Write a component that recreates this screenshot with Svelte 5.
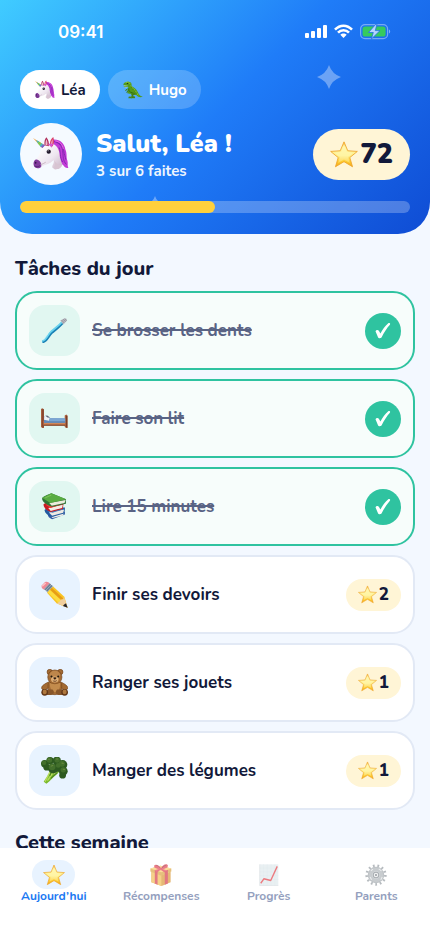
<script lang="ts">
	type Child = { id: string; name: string; icon: string };
	type Task = { id: number; label: string; icon: string; stars: number; done: boolean };

	const children: Child[] = [
		{ id: 'lea', name: 'Léa', icon: 'unicorn' },
		{ id: 'hugo', name: 'Hugo', icon: 'dino' }
	];

	const tabs = [
		{ id: 'today', label: 'Aujourd’hui', icon: 'star' },
		{ id: 'rewards', label: 'Récompenses', icon: 'gift' },
		{ id: 'progress', label: 'Progrès', icon: 'chart' },
		{ id: 'parents', label: 'Parents', icon: 'gear' }
	];

	let tasks = $state<Task[]>([
		{ id: 1, label: 'Se brosser les dents', icon: 'toothbrush', stars: 1, done: true },
		{ id: 2, label: 'Faire son lit', icon: 'bed', stars: 1, done: true },
		{ id: 3, label: 'Lire 15 minutes', icon: 'books', stars: 2, done: true },
		{ id: 4, label: 'Finir ses devoirs', icon: 'pencil', stars: 2, done: false },
		{ id: 5, label: 'Ranger ses jouets', icon: 'bear', stars: 1, done: false },
		{ id: 6, label: 'Manger des légumes', icon: 'broccoli', stars: 1, done: false }
	]);

	let activeChild = $state('lea');
	let activeTab = $state('today');
	let points = $state(72);

	let child = $derived(children.find((c) => c.id === activeChild) ?? children[0]);
	let doneCount = $derived(tasks.filter((t) => t.done).length);
	let progress = $derived((doneCount / tasks.length) * 100);

	function toggle(task: Task) {
		task.done = !task.done;
		points += task.done ? task.stars : -task.stars;
	}
</script>

{#snippet emoji(name: string)}
	{#if name === 'star'}
		<svg class="emoji" viewBox="0 0 82 78" aria-hidden="true">
			<path d="M41 2 52 28 80 30 58 48 66 75 41 60 16 75 24 48 2 30 30 28Z" fill="url(#star-fill)" stroke="#eda52c" stroke-width="2.5" stroke-linejoin="round" />
			<path d="M41 10 49 31 69 34 53 46 58 64 41 54 24 64 29 46 13 34 33 31Z" fill="#fffbd0" opacity=".35" />
		</svg>
	{:else if name === 'unicorn'}
		<svg class="emoji" viewBox="0 0 110 104" aria-hidden="true">
			<path d="M56 9C77 3 96 17 99 38c6 12 2 24 6 34 3 8-1 15 3 23-9 1-13-4-16-9-7-4-9-13-9-22-9-8-10-17-11-28Z" fill="#c13bd6" />
			<path d="M64 14c17 3 27 17 27 32 2 13-1 25 11 38M73 16c14 5 20 16 21 27 1 12 6 17 6 26M80 32c5 14 1 31 11 45" fill="none" stroke="#8428b4" stroke-width="3" />
			<path d="M68 12c14 1 22 12 25 24" fill="none" stroke="#ef6ce4" stroke-width="3" />
			<path d="M31 28C43 17 66 18 74 31c12 19 3 29 15 50 1 15-20 23-30 12-1-9 7-13 4-23C52 82 38 84 27 89 20 99 4 97 2 84 1 74 8 69 14 62 20 54 25 38 31 28Z" fill="url(#coat)" />
			<path d="M63 70c6 7 3 20 2 29 9 2 22-4 24-14-8 4-18-4-26-15Z" fill="#d8c4d2" />
			<path d="M4 73c5-8 13-4 19 4 2 5 3 9 2 14C19 99 4 97 2 86c-1-5 0-9 2-13Z" fill="#813b9c" />
			<ellipse cx="8" cy="79" rx="2.5" ry="3" fill="#37144f" />
			<path d="m5 89c6 3 12 2 16-1" fill="none" stroke="#431b61" stroke-width="2" />
			<path d="M35 25C34 12 37 5 41 1c6 8 9 17 7 27Z" fill="#ae2b58" />
			<path d="M52 24C51 13 55 5 62 0c3 10 3 19-2 29Z" fill="#dc3d68" />
			<path d="M38 24c0-8 1-13 3-17 3 7 4 12 3 19ZM55 25c0-8 2-13 5-18 0 9 0 15-4 20Z" fill="#efb9cc" />
			<path d="M46 22c6-4 12-3 18 2-5 0-7 4-6 9Z" fill="#d855ce" />
			<path d="M0 3 36 25 28 34Z" fill="#f5a33f" />
			<path d="m9 9 10 5-4 6ZM25 18l6 4-7 9-4-5Z" fill="#49b9bd" />
			<path d="m18 14 7 4-5 8-5-6Z" fill="#7acc50" />
			<path d="m31 22 6 3-8 9-5-4Z" fill="#7362d3" />
			<circle cx="48" cy="45" r="6.5" fill="#21182b" />
			<circle cx="46" cy="42" r="1.8" fill="#fff" />
			<path d="M22 84c9-1 11-4 17-7" fill="none" stroke="#b69cac" stroke-width="2" />
		</svg>
	{:else if name === 'dino'}
		<svg class="emoji" viewBox="0 0 68 58" aria-hidden="true">
			<path d="M1 10C3 3 10 0 20 1c8 1 10 6 9 13 2 5 8 6 12 10 8 5 10 16 15 22 4 4 8 5 11 4-5 6-15 4-22-4-3 0-5-1-8-2l-3 5 7 4v4H27l4-8-5-7c-7 1-11-3-11-10 0-7 5-10 2-14L5 20l-3-4 8-2-8-1Z" fill="#539b1c" />
			<path d="M9 4c7-4 15-1 15 5M25 14c3 6 10 7 14 13 6 6 7 14 13 20" fill="none" stroke="#91ca36" stroke-width="3" />
			<path d="M20 23c-2 9 3 14 11 15l7 5-7 2" fill="none" stroke="#2e6813" stroke-width="3" />
			<path d="M16 25 9 29l2 4M20 30l-7 6 2 4" fill="none" stroke="#3f7c18" stroke-width="3" />
			<path d="m4 14 12 1M4 18l9 2" stroke="#e5e7be" stroke-width="1.5" />
			<path d="M29 40c4-5 12-3 14 2-3 5-8 2-10 9h7v5h-9l-3-6c3-3 3-6 1-10Z" fill="#467f18" />
			<path d="m20 51 10 1v5H18Z" fill="#47841b" />
			<circle cx="15" cy="7" r="2" fill="#211b0b" />
			<path d="m27 19 4 1m2 7 3-2m3 8 4-2m1 9 4-1" stroke="#2b6313" stroke-width="2" />
		</svg>
	{:else if name === 'toothbrush'}
		<svg class="emoji" viewBox="0 0 80 80" aria-hidden="true">
			<path d="M7 73c11-3 15-18 25-27 14-11 22-17 33-30" fill="none" stroke="#1981b5" stroke-width="8" stroke-linecap="round" />
			<path d="M5 71c12-4 15-19 25-28 13-11 23-17 34-30" fill="none" stroke="#68d2ee" stroke-width="5" stroke-linecap="round" />
			<path d="m57 10 13-6c5-1 8 3 6 8L66 22Z" fill="#b4b8bf" />
			<path d="m61 9 8 9m-4-12 8 8m-3-9 6 6" stroke="#8f8590" stroke-width="2" />
			<path d="M20 51c-6 7-9 14-14 18" fill="none" stroke="#c9f4fb" stroke-width="2" />
		</svg>
	{:else if name === 'bed'}
		<svg class="emoji" viewBox="0 0 82 62" aria-hidden="true">
			<path d="M0 2 4 0l5 3v57H4l-4-3ZM72 22l5-3 4 4v37h-5l-4-4Z" fill="#a95f3d" />
			<path d="M6 3v55M78 23v35" stroke="#6e3525" stroke-width="3" />
			<path d="M7 38h67v15H7Z" fill="#b76b43" />
			<path d="M9 25c5-2 14-1 19 5l46 1v14H9Z" fill="#6189b8" />
			<path d="M10 24c8-3 15 0 18 6l-4 8L9 35Z" fill="#eef2f6" />
			<path d="M25 30h48v9H25Z" fill="#7ba6d3" />
			<path d="m13 23 6-1 9 7-8-1Z" fill="#5e6579" />
			<path d="M9 46h64" stroke="#d1895b" stroke-width="3" />
			<path d="M7 52h67" stroke="#71402d" stroke-width="2" />
		</svg>
	{:else if name === 'books'}
		<svg class="emoji" viewBox="0 0 76 78" aria-hidden="true">
			<path d="M18 61c6-6 15-6 20-6l30-1v8L31 76c-8-3-12-7-13-15Z" fill="#3159a5" />
			<path d="m27 66 38-9-2 8-31 7Z" fill="#f2ede5" />
			<path d="m22 61 36-11 9 5-36 14Z" fill="#5a80bc" />
			<path d="M9 49c8-8 18-7 24-7h35v6l-2 11-36 10C18 64 10 58 9 49Z" fill="#225aa0" />
			<path d="m22 56 44-8-3 9-32 9Z" fill="#eee9e3" />
			<path d="m16 52 34-9 17 3-35 11Z" fill="#457ebc" />
			<path d="M6 33c6-7 18-6 24-5l34 2-2 16-35 9C13 49 8 43 6 33Z" fill="#c81922" />
			<path d="m20 43 42-9-2 9-33 9Z" fill="#f2ede6" />
			<path d="m12 34 27-8 23 6-35 11Z" fill="#f13831" />
			<path d="M2 16C8 7 20 6 29 1l42 17v13L31 40C13 33 3 26 2 16Z" fill="#2e7436" />
			<path d="m23 29 47-9-3 9-37 8Z" fill="#ecebdd" />
			<path d="M2 14 29 1l43 17-46 11Z" fill="#59ac42" />
			<path d="m11 14 18-8" stroke="#92ce66" stroke-width="2" />
		</svg>
	{:else if name === 'pencil'}
		<svg class="emoji" viewBox="0 0 80 80" aria-hidden="true">
			<path d="m2 13 10-10c6-3 12 0 17 8L12 27C4 24 0 19 2 13Z" fill="#ef8994" />
			<path d="m9 24 16-17 12 11-17 17Z" fill="#9caabb" />
			<path d="m12 26 16-17m-11 20 16-16" stroke="#5d7589" stroke-width="3" />
			<path d="m18 35 18-19 33 31 10 32-32-12Z" fill="#fac421" />
			<path d="m26 26 34 32-7 7-33-31Z" fill="#fcdc41" />
			<path d="m32 20 34 32-5 5-34-31Z" fill="#e69d18" />
			<path d="m46 66 8-4 5-7 7-1 2-7 11 32Z" fill="#f0ce9d" />
			<path d="m68 70 6-4 5 13-14-5Z" fill="#252329" />
			<path d="m5 14 8-7" stroke="#ffc3c5" stroke-width="4" stroke-linecap="round" />
		</svg>
	{:else if name === 'bear'}
		<svg class="emoji" viewBox="0 0 80 80" aria-hidden="true">
			<g fill="#a36b34" stroke="#754319" stroke-width="2">
				<circle cx="26" cy="9" r="8" />
				<circle cx="57" cy="9" r="8" />
				<path d="M23 38C12 44 1 49 2 57c2 8 12 7 25-6M58 38c11 6 22 11 21 19-2 8-12 7-25-6" />
				<path d="M21 44c-1 21 3 32 20 32s22-12 20-32L52 33H30Z" />
				<ellipse cx="41" cy="24" rx="21" ry="21" />
			</g>
			<path d="M26 41c12 7 22 4 31 0 0 18-5 26-15 28-11-2-16-12-16-28Z" fill="#c38b4c" />
			<ellipse cx="41" cy="18" rx="16" ry="13" fill="#bd864b" />
			<ellipse cx="41" cy="31" rx="11" ry="9" fill="#e2b279" />
			<circle cx="31" cy="22" r="3" fill="#20180f" />
			<circle cx="51" cy="22" r="3" fill="#20180f" />
			<path d="M36 26c4-2 7-2 10 0-1 5-8 6-10 0Z" fill="#2a190f" />
			<path d="M41 30v4m-6 0c4 4 8 4 12 0" fill="none" stroke="#502d17" stroke-width="2" />
			<path d="M18 61h16c7 6 5 15-4 16H9ZM64 61H48c-7 6-5 15 4 16h20Z" fill="#88562a" />
			<ellipse cx="11" cy="69" rx="10" ry="10" fill="#633818" />
			<ellipse cx="70" cy="69" rx="10" ry="10" fill="#633818" />
			<ellipse cx="11" cy="68" rx="6" ry="7" fill="#af783e" />
			<ellipse cx="70" cy="68" rx="6" ry="7" fill="#af783e" />
		</svg>
	{:else if name === 'broccoli'}
		<svg class="emoji" viewBox="0 0 80 80" aria-hidden="true">
			<path d="M30 34c-1 14-15 27-22 39l8 6c12-8 19-20 32-29l9-10Z" fill="#79ba2c" />
			<path d="M27 43 12 73M38 43 19 70M38 51l12-13" fill="none" stroke="#b7db5a" stroke-width="4" />
			<path d="m31 43-5 13m22-10L29 63" stroke="#498020" stroke-width="3" />
			<g fill="#2d5a20">
				<circle cx="11" cy="20" r="11" />
				<circle cx="27" cy="11" r="11" />
				<circle cx="47" cy="11" r="12" />
				<circle cx="64" cy="23" r="14" />
				<circle cx="66" cy="42" r="13" />
				<circle cx="64" cy="54" r="10" />
				<circle cx="17" cy="30" r="10" />
				<circle cx="36" cy="34" r="15" />
				<circle cx="50" cy="30" r="14" />
			</g>
			<g fill="#43702c">
				<circle cx="9" cy="17" r="7" />
				<circle cx="25" cy="9" r="8" />
				<circle cx="48" cy="9" r="8" />
				<circle cx="62" cy="20" r="9" />
				<circle cx="66" cy="38" r="8" />
				<circle cx="33" cy="29" r="10" />
				<circle cx="51" cy="25" r="7" />
			</g>
			<path d="M22 7h3m21-1h4m12 12 4 1M30 27l5-2m31 11 4 1" stroke="#6a8b40" stroke-width="3" stroke-linecap="round" />
		</svg>
	{:else if name === 'gift'}
		<svg class="emoji" viewBox="0 0 64 64" aria-hidden="true">
			<path d="m4 22 28 11 28-11v31L34 64 4 53Z" fill="#d48a1c" />
			<path d="m4 22 29 11v31L4 53Z" fill="#efb33b" />
			<path d="m1 13 29-8 32 8v9L33 34 1 22Z" fill="#d79728" />
			<path d="m1 13 29-8 32 8-29 11Z" fill="#f8cb59" />
			<path d="m14 17 8 3v40l-8-3ZM43 20l9-3v40l-9 3Z" fill="#cf2030" />
			<path d="m11 10 8-2 31 11-8 3ZM44 8l8 2-31 11-8-3Z" fill="#e83d47" />
			<path d="M30 14C23 13 11 11 12 5c3-7 17 0 20 8 3-10 17-17 20-9 2 7-11 9-18 10l11 7-3 4-11-10-10 10-5-5Z" fill="#dc2438" />
			<path d="M18 4c5 0 9 4 12 8m5 0c3-5 8-8 12-8" fill="none" stroke="#7c1326" stroke-width="2" />
		</svg>
	{:else if name === 'chart'}
		<svg class="emoji" viewBox="0 0 64 64" aria-hidden="true">
			<path d="M5 1h54v62H5Z" fill="#dce7eb" />
			<path d="M5 12h54M5 23h54M5 34h54M5 45h54M16 1v62M27 1v62M38 1v62M49 1v62" stroke="#cbdce1" stroke-width="1" />
			<path d="M5 1v62h54" fill="none" stroke="#c6cfd2" stroke-width="2" />
			<path d="m8 56 9-13 20 5L56 7" fill="none" stroke="#e1232b" stroke-width="4" stroke-linejoin="round" />
		</svg>
	{:else if name === 'gear'}
		<svg class="emoji" viewBox="0 0 64 64" aria-hidden="true">
			<circle cx="32" cy="32" r="27" fill="none" stroke="#868e95" stroke-width="8" stroke-dasharray="5 8.05" />
			<circle cx="32" cy="32" r="19" fill="#c4cacd" stroke="#959ca2" stroke-width="10" />
			<circle cx="32" cy="32" r="16" fill="none" stroke="#a4abb0" stroke-width="10" />
			<circle cx="32" cy="32" r="8" fill="#e8eaeb" stroke="#717980" stroke-width="3" />
			<circle cx="32" cy="32" r="3" fill="#545b63" />
			<path d="m17 20 6-5m17-1 8 6M15 38l4 8m27 0 4-8" stroke="#e2e5e6" stroke-width="3" />
		</svg>
	{/if}
{/snippet}

<svg class="defs" width="0" height="0" aria-hidden="true">
	<defs>
		<linearGradient id="star-fill" x1="0" y1="0" x2="0" y2="1">
			<stop offset="0" stop-color="#fbb63b" />
			<stop offset=".2" stop-color="#fff3a0" />
			<stop offset=".55" stop-color="#fff08a" />
			<stop offset=".8" stop-color="#fdc82a" />
			<stop offset="1" stop-color="#f4a51c" />
		</linearGradient>
		<linearGradient id="coat" x1="0" y1="0" x2="1" y2="1">
			<stop offset=".2" stop-color="#fff" />
			<stop offset=".6" stop-color="#ede5ef" />
			<stop offset="1" stop-color="#c7afc3" />
		</linearGradient>
	</defs>
</svg>

<div class="app">
	<div class="scroll">
		<header>
			<svg class="sparkle sparkle-top" viewBox="0 0 24 24" aria-hidden="true">
				<path d="M12 0Q15 9 24 12Q15 15 12 24Q9 15 0 12Q9 9 12 0Z" />
			</svg>
			<svg class="sparkle sparkle-low" viewBox="0 0 24 24" aria-hidden="true">
				<path d="M12 0Q15 9 24 12Q15 15 12 24Q9 15 0 12Q9 9 12 0Z" />
			</svg>

			<div class="status">
				<time>09:41</time>
				<svg width="86" height="16" viewBox="0 0 86 16" aria-hidden="true">
					<g fill="#fff">
						<rect x="0" y="9" width="4" height="5" rx="1" />
						<rect x="6" y="7" width="4" height="7" rx="1" />
						<rect x="12" y="4" width="4" height="10" rx="1" />
						<rect x="18" y="1" width="4" height="13" rx="1" />
					</g>
					<g fill="none" stroke="#fff" stroke-width="2.6">
						<path d="M30 5.6C35 .4 42 .4 47 5.6" />
						<path d="M33 8.6C36 5.4 41 5.4 44 8.6" />
					</g>
					<path d="M35.3 10.8C37 9 40 9 41.7 10.8L38.5 14Z" fill="#fff" />
					<rect x="55.6" y=".6" width="27" height="14" rx="4.4" fill="none" stroke="#fff" stroke-opacity=".4" stroke-width="1.2" />
					<path d="M84 5.5c1.6.6 1.6 3.4 0 4Z" fill="#fff" opacity=".45" />
					<rect x="57.6" y="2.6" width="23" height="10" rx="2.6" fill="#36ca5c" />
					<path d="M71 0 63.5 8.5H68.3L66.4 15 75 6.6H70.3L72 0Z" fill="#b6d5ff" stroke="#2271e4" stroke-width=".8" />
				</svg>
			</div>

			<div class="children">
				{#each children as c (c.id)}
					<button
						class="child"
						class:active={c.id === activeChild}
						aria-pressed={c.id === activeChild}
						onclick={() => (activeChild = c.id)}
					>
						{@render emoji(c.icon)}
						{c.name}
					</button>
				{/each}
			</div>

			<div class="hero">
				<div class="avatar">{@render emoji(child.icon)}</div>
				<div class="greeting">
					<h1>Salut, {child.name} !</h1>
					<p>{doneCount} sur {tasks.length} faites</p>
				</div>
				<div class="points">
					{@render emoji('star')}
					<span>{points}</span>
				</div>
			</div>

			<div
				class="bar"
				role="progressbar"
				aria-label="Tâches faites"
				aria-valuenow={doneCount}
				aria-valuemin="0"
				aria-valuemax={tasks.length}
			>
				<div class="bar-fill" style="width: {progress}%"></div>
			</div>
		</header>

		<main>
			<h2>Tâches du jour</h2>
			<ul>
				{#each tasks as task (task.id)}
					<li>
						<button class="task" class:done={task.done} aria-pressed={task.done} onclick={() => toggle(task)}>
							<span class="task-icon">{@render emoji(task.icon)}</span>
							<span class="task-label">{task.label}</span>
							{#if task.done}
								<svg class="check" viewBox="0 0 36 36" aria-hidden="true">
									<circle cx="18" cy="18" r="18" fill="#2fc3a0" />
									<path d="M10.5 18.3C11.2 16.8 13.2 16.4 14 18L15.4 20.4C17.7 16.2 20.2 12.8 23 10.4C24.2 9.6 25.8 10.4 24.9 11.7C21.6 15.4 18.9 19.6 16.8 24.1C16.2 25.6 13.6 25.7 13 24.3Z" fill="#fff" />
								</svg>
							{:else}
								<span class="reward">
									{@render emoji('star')}
									{task.stars}
								</span>
							{/if}
						</button>
					</li>
				{/each}
			</ul>
			<h2>Cette semaine</h2>
		</main>
	</div>

	<nav>
		{#each tabs as tab (tab.id)}
			<button
				class="tab"
				class:active={tab.id === activeTab}
				aria-current={tab.id === activeTab ? 'page' : undefined}
				onclick={() => (activeTab = tab.id)}
			>
				<span class="tab-icon">{@render emoji(tab.icon)}</span>
				{tab.label}
			</button>
		{/each}
	</nav>
</div>

<style>
	:global(body) {
		margin: 0;
		background: #f3f8ff;
	}

	.defs {
		position: absolute;
	}

	.app {
		display: flex;
		flex-direction: column;
		height: 100dvh;
		color: #12193a;
		font-family: Nunito, Lato, 'Open Sans', sans-serif;
		font-weight: 700;
	}

	button {
		border: 0;
		margin: 0;
		padding: 0;
		background: none;
		color: inherit;
		font: inherit;
		cursor: pointer;
	}

	.emoji {
		display: block;
		flex: none;
	}

	.scroll {
		flex: 1;
		min-height: 0;
		overflow-y: auto;
		scrollbar-width: none;
	}

	header {
		position: relative;
		padding: 20px 20px 21px;
		border-radius: 0 0 32px 32px;
		background: linear-gradient(135deg, #40ccff 0%, #1f7cf8 50%, #0f4cd4 100%);
		color: #fff;
	}

	.sparkle {
		position: absolute;
		fill: #fff;
		opacity: 0.35;
	}

	.sparkle-top {
		top: 65px;
		right: 89px;
		width: 24px;
	}

	.sparkle-low {
		bottom: 22px;
		left: 147px;
		width: 16px;
	}

	.status {
		display: flex;
		align-items: center;
		justify-content: space-between;
		height: 24px;
		padding: 0 19px 0 38px;
		margin-bottom: 26px;
		font-family: Inter, sans-serif;
		font-size: 17px;
		font-weight: 600;
	}

	.children {
		display: flex;
		gap: 8px;
		margin-bottom: 14px;
	}

	.child {
		display: flex;
		align-items: center;
		gap: 6px;
		height: 39px;
		padding: 0 14px 0 15px;
		border-radius: 20px;
		background: rgba(255, 255, 255, 0.2);
		font-size: 15px;
	}

	.child.active {
		background: #fff;
		color: #12193a;
	}

	.child .emoji {
		width: 20px;
		height: 20px;
	}

	.hero {
		position: relative;
		display: flex;
		align-items: center;
		gap: 14px;
		margin-bottom: 16px;
	}

	.avatar {
		display: grid;
		place-items: center;
		width: 62px;
		height: 62px;
		border-radius: 50%;
		background: #f5faff;
	}

	.avatar .emoji {
		width: 36px;
		height: 34px;
	}

	.greeting {
		flex: 1;
	}

	h1,
	h2,
	p {
		margin: 0;
	}

	h1 {
		font-size: 25px;
		font-weight: 900;
		line-height: 34px;
	}

	p {
		font-size: 15px;
		line-height: 20px;
		opacity: 0.92;
	}

	.points {
		display: flex;
		align-items: center;
		gap: 3px;
		height: 51px;
		padding: 0 17px;
		border-radius: 26px;
		background: #fff5d6;
		color: #12193a;
		font-size: 27px;
		font-weight: 900;
	}

	.points .emoji {
		width: 28px;
		height: 27px;
	}

	.bar {
		position: relative;
		height: 12px;
		border-radius: 6px;
		background: rgba(255, 255, 255, 0.25);
		overflow: hidden;
	}

	.bar-fill {
		height: 100%;
		border-radius: 6px;
		background: #ffd03c;
	}

	main {
		padding: 21px 15px;
	}

	h2 {
		font-size: 20px;
		font-weight: 800;
		line-height: 27px;
	}

	ul {
		display: flex;
		flex-direction: column;
		gap: 9px;
		margin: 9px 0 19px;
		padding: 0;
		list-style: none;
	}

	.task {
		display: flex;
		align-items: center;
		gap: 12px;
		width: 100%;
		padding: 12px;
		border: 2px solid #e2e9f5;
		border-radius: 22px;
		background: #fff;
		font-size: 17px;
		text-align: left;
	}

	.task.done {
		border-color: #2fc3a0;
		background: #f7fdfb;
	}

	.task-icon {
		display: grid;
		place-items: center;
		width: 51px;
		height: 51px;
		border-radius: 16px;
		background: #e8f3ff;
	}

	.done .task-icon {
		background: #e1f7f1;
	}

	.task-icon .emoji {
		width: 27px;
		height: 27px;
	}

	.task-label {
		flex: 1;
	}

	.done .task-label {
		color: #596384;
		text-decoration: line-through 2px;
	}

	.check {
		width: 36px;
		height: 36px;
	}

	.reward {
		display: flex;
		align-items: center;
		gap: 2px;
		height: 32px;
		padding: 0 12px;
		border-radius: 16px;
		background: #fff5d6;
		font-weight: 800;
	}

	.reward .emoji {
		width: 19px;
		height: 19px;
	}

	nav {
		display: grid;
		grid-template-columns: repeat(4, 1fr);
		padding: 12px 0 31px;
		background: #fff;
	}

	.tab {
		display: flex;
		flex-direction: column;
		align-items: center;
		color: #949fbe;
		font-size: 12px;
		line-height: 14px;
	}

	.tab.active {
		color: #1a78f2;
	}

	.tab-icon {
		display: grid;
		place-items: center;
		width: 43px;
		height: 29px;
		border-radius: 15px;
	}

	.tab-icon .emoji {
		width: 22px;
		height: 22px;
		opacity: 0.6;
	}

	.active .tab-icon {
		background: #e8f3ff;
	}

	.active .tab-icon .emoji {
		opacity: 1;
	}
</style>
